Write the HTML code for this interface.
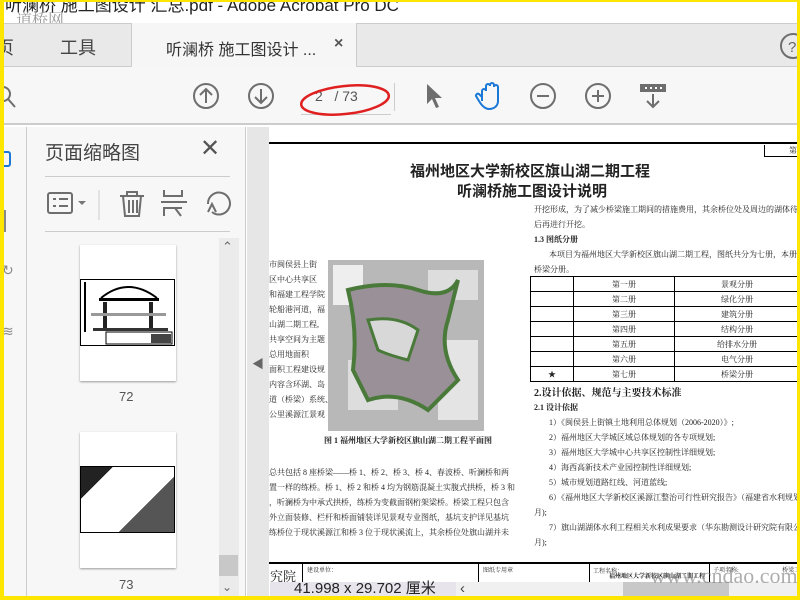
<!DOCTYPE html>
<html><head><meta charset="utf-8"><style>
*{margin:0;padding:0;box-sizing:border-box}
body{width:800px;height:600px;overflow:hidden;position:relative;background:#fff;font-family:"Liberation Sans","Noto Sans CJK SC",sans-serif}
.a{position:absolute}
.t{position:absolute;white-space:nowrap}
.doc{font-family:"Liberation Serif","Noto Serif CJK SC",serif;color:#222;font-size:8px}
.ic{stroke:#6e6e6e;fill:none;stroke-width:2}
td{border:1px solid #000;text-align:center;font-size:8px;height:15px;font-family:"Noto Serif CJK SC",serif}
</style></head><body>
<div class="a" style="left:0;top:0;width:800px;height:23px;background:#fff"></div>
<div class="t" style="left:5px;top:-9px;font-size:17px;color:#222">听澜桥 施工图设计 汇总.pdf - Adobe Acrobat Pro DC</div>
<div class="t" style="left:16px;top:7px;font-size:16px;color:#999;font-family:'Noto Serif CJK SC',serif">道桥网</div>
<div class="a" style="left:0;top:23px;width:800px;height:44px;background:#e9e9e9;border-top:1px solid #ccc;border-bottom:1px solid #ccc"></div>
<div class="a" style="left:131px;top:23px;width:226px;height:45px;background:#f6f6f6;border-left:1px solid #ccc;border-right:1px solid #ccc"></div>
<div class="t" style="left:-4px;top:34px;font-size:18px;color:#444">页</div>
<div class="t" style="left:60px;top:34px;font-size:18px;color:#444">工具</div>
<div class="t" style="left:166px;top:36px;font-size:16px;color:#333">听澜桥 施工图设计 ...</div>
<div class="t" style="left:334px;top:35px;font-size:16px;color:#555;font-weight:bold">×</div>
<svg class="a" style="left:778px;top:32px" width="22" height="28"><circle cx="15" cy="14" r="12" class="ic"/><text x="10" y="20" font-size="15" fill="#666" font-family="Liberation Sans">?</text></svg>
<div class="a" style="left:0;top:67px;width:800px;height:58px;background:#f7f7f7;border-bottom:2px solid #ccc"></div>
<svg class="a" style="left:0;top:84px" width="20" height="26"><circle cx="3" cy="10" r="7" class="ic" stroke-width="2.5"/><line x1="8" y1="15" x2="15" y2="23" class="ic" stroke-width="3"/></svg>
<svg class="a" style="left:192px;top:82px" width="28" height="28"><circle cx="14" cy="14" r="12" class="ic"/><path d="M14 21V7M8 13l6-6 6 6" class="ic"/></svg>
<svg class="a" style="left:247px;top:82px" width="28" height="28"><circle cx="14" cy="14" r="12" class="ic"/><path d="M14 7v14M8 15l6 6 6-6" class="ic"/></svg>
<div class="a" style="left:301px;top:114px;width:90px;height:1px;background:#ccc"></div>
<div class="t" style="left:315px;top:88px;font-size:14px;color:#555">2&nbsp;&nbsp;&nbsp;/ 73</div>
<svg class="a" style="left:298px;top:80px" width="96" height="40"><ellipse cx="47" cy="20" rx="44" ry="14" fill="none" stroke="#e02020" stroke-width="2.5" transform="rotate(-6 47 20)"/></svg>
<div class="a" style="left:394px;top:83px;width:1px;height:28px;background:#ccc"></div>
<svg class="a" style="left:424px;top:82px" width="20" height="28"><path d="M3 2v20l5-5 4 9 3-1-4-9h7z" fill="#6e6e6e"/></svg>
<svg class="a" style="left:474px;top:81px" width="30" height="30"><path d="M8 20V10a2 2 0 014 0V5a2 2 0 014 0v-1a2 2 0 014 0v2a2 2 0 014 0v14c0 5-4 8-9 8-4 0-7-3-10-8l-3-5a2 2 0 013-2l3 3" fill="none" stroke="#1a78d6" stroke-width="2"/></svg>
<svg class="a" style="left:529px;top:82px" width="28" height="28"><circle cx="14" cy="14" r="12" class="ic"/><path d="M8 14h12" class="ic"/></svg>
<svg class="a" style="left:584px;top:82px" width="28" height="28"><circle cx="14" cy="14" r="12" class="ic"/><path d="M8 14h12M14 8v12" class="ic"/></svg>
<svg class="a" style="left:639px;top:82px" width="28" height="30"><rect x="1" y="2" width="26" height="8" fill="#6e6e6e"/><path d="M6 6h2M11 6h2M16 6h2M21 6h2" stroke="#fff" stroke-width="2"/><path d="M14 12v13M8 19l6 6 6-6" class="ic"/></svg>
<div class="a" style="left:0;top:127px;width:27px;height:473px;background:#f7f7f7;border-right:1px solid #ccc"></div>
<div class="a" style="left:4px;top:151px;width:7px;height:16px;border:2px solid #1a78d6;border-left:none;border-radius:0 3px 3px 0"></div>
<div class="a" style="left:4px;top:210px;width:2px;height:22px;background:#888"></div>
<div class="t" style="left:2px;top:262px;font-size:14px;color:#888">↻</div>
<div class="t" style="left:2px;top:323px;font-size:14px;color:#888">≋</div>
<div class="a" style="left:27px;top:127px;width:219px;height:473px;background:#f7f7f7;border-right:1px solid #ccc"></div>
<div class="t" style="left:45px;top:138px;font-size:19px;color:#444">页面缩略图</div>
<div class="t" style="left:200px;top:134px;font-size:24px;color:#555">✕</div>
<div class="a" style="left:45px;top:176px;width:185px;height:1px;background:#ccc"></div>
<svg class="a" style="left:45px;top:188px" width="190" height="32"><rect x="3" y="5" width="24" height="20" rx="2" class="ic" stroke-width="2.5"/><path d="M8 11h3M14 11h9M8 18h3M14 18h9" class="ic" stroke-width="2.5"/><path d="M33 13h8l-4 4z" fill="#777"/><line x1="54" y1="2" x2="54" y2="32" stroke="#ccc"/><path d="M75 8h24M82 8V4h10v4M78 8l2 20h14l2-20M84 12v13M88 12v13M92 12v13" class="ic" stroke-width="2.2"/><path d="M119 2v6h18V2M119 28v-8h18M116 14h26M136 28l-6-8" class="ic" stroke-width="2.5"/><path d="M167 24a11 11 0 10-4-8M163 24l4-8 4 8" class="ic" stroke-width="2.5"/></svg>
<div class="a" style="left:45px;top:231px;width:185px;height:1px;background:#ccc"></div>
<div class="a" style="left:219px;top:238px;width:20px;height:358px;background:#ebebeb"></div>
<div class="t" style="left:222px;top:239px;font-size:13px;color:#666">⌃</div>
<div class="a" style="left:219px;top:555px;width:19px;height:21px;background:#c8c8c8"></div>
<div class="t" style="left:222px;top:580px;font-size:12px;color:#666">⌄</div>
<div class="a" style="left:80px;top:245px;width:96px;height:136px;background:#fff;box-shadow:0 1px 2px #999"></div>
<div class="a" style="left:80px;top:279px;width:95px;height:67px;border:1px solid #000;background:#fff"></div>
<svg class="a" style="left:81px;top:280px" width="93" height="65"><rect x="3" y="2" width="2" height="50" fill="#000"/><path d="M20 18Q47 -4 76 18" stroke="#000" fill="none" stroke-width="2"/><rect x="18" y="18" width="60" height="3" fill="#000"/><rect x="22" y="22" width="4" height="28" fill="#222"/><rect x="68" y="22" width="4" height="28" fill="#222"/><rect x="10" y="33" width="75" height="3" fill="#999"/><rect x="12" y="48" width="75" height="3" fill="#333"/><rect x="25" y="52" width="66" height="12" fill="none" stroke="#000"/><rect x="70" y="54" width="20" height="9" fill="#444"/></svg>
<div class="t" style="left:119px;top:389px;font-size:13px;color:#555">72</div>
<div class="a" style="left:80px;top:432px;width:96px;height:136px;background:#fff;box-shadow:0 1px 2px #999"></div>
<div class="a" style="left:80px;top:466px;width:95px;height:67px;border:1px solid #000;background:linear-gradient(135deg,#222 0 20%,#fff 20% 65%,#555 65%)"></div>
<div class="t" style="left:119px;top:577px;font-size:13px;color:#555">73</div>
<div class="a" style="left:247px;top:127px;width:22px;height:473px;background:#e6e6e6"></div>
<div class="t" style="left:252px;top:355px;font-size:12px;color:#666">◀</div>
<div class="a doc" style="left:269px;top:127px;width:528px;height:469px;background:#fff">
 <div class="a" style="left:0;top:15px;width:528px;height:2px;background:#000"></div>
 <div class="a" style="left:495px;top:18px;width:33px;height:12px;border-bottom:1px solid #000;border-left:1px solid #000;font-size:8px;text-align:right">第</div>
 <div class="t" style="left:141px;top:33px;font-size:15px;font-weight:bold;font-family:'Noto Sans CJK SC',sans-serif">福州地区大学新校区旗山湖二期工程</div>
 <div class="t" style="left:188px;top:53px;font-size:15px;font-weight:bold;font-family:'Noto Sans CJK SC',sans-serif">听澜桥施工图设计说明</div>
 <div class="t" style="left:265px;top:77px">开挖形成，为了减少桥梁施工期间的措施费用，其余桥位处及周边的湖体待桥梁</div>
 <div class="t" style="left:265px;top:92px">后再进行开挖。</div>
 <div class="t" style="left:265px;top:107px;font-weight:bold">1.3 图纸分册</div>
 <div class="t" style="left:280px;top:122px">本项目为福州地区大学新校区旗山湖二期工程，图纸共分为七册，本册为桥</div>
 <div class="t" style="left:265px;top:137px">桥梁分册。</div>
 <table class="a" style="left:261px;top:149px;width:270px;border-collapse:collapse">
  <tr><td style="width:43px"></td><td style="width:101px">第一册</td><td>景观分册</td></tr>
  <tr><td></td><td>第二册</td><td>绿化分册</td></tr>
  <tr><td></td><td>第三册</td><td>建筑分册</td></tr>
  <tr><td></td><td>第四册</td><td>结构分册</td></tr>
  <tr><td></td><td>第五册</td><td>给排水分册</td></tr>
  <tr><td></td><td>第六册</td><td>电气分册</td></tr>
  <tr><td>★</td><td>第七册</td><td>桥梁分册</td></tr>
 </table>
 <div class="t" style="left:265px;top:257px;font-size:10px;font-weight:bold">2.设计依据、规范与主要技术标准</div>
 <div class="t" style="left:265px;top:275px;font-weight:bold">2.1 设计依据</div>
 <div class="t" style="left:280px;top:290px">1）《闽侯县上街镇土地利用总体规划（2006-2020）》;</div>
 <div class="t" style="left:280px;top:305px">2）福州地区大学城区域总体规划的各专项规划;</div>
 <div class="t" style="left:280px;top:320px">3）福州地区大学城中心共享区控制性详细规划;</div>
 <div class="t" style="left:280px;top:335px">4）海西高新技术产业园控制性详细规划;</div>
 <div class="t" style="left:280px;top:350px">5）城市规划道路红线、河道蓝线;</div>
 <div class="t" style="left:280px;top:365px">6）《福州地区大学新校区溪源江整治可行性研究报告》（福建省水利规划院</div>
 <div class="t" style="left:265px;top:380px">月);</div>
 <div class="t" style="left:280px;top:395px">7）旗山湖湖体水利工程相关水利成果要求（华东勘测设计研究院有限公司</div>
 <div class="t" style="left:265px;top:410px">月);</div>
 <div class="a" style="left:0;top:130px;width:60px;line-height:15px;white-space:nowrap">市闽侯县上街<br>区中心共享区<br>和福建工程学院<br>轮船港河道，福<br>山湖二期工程,<br>共享空间为主题<br>总用地面积<br>面积工程建设规<br>内容含环湖、岛<br>道（桥梁）系统、<br>公里溪源江景观</div>
 <svg class="a" style="left:59px;top:133px" width="156" height="171"><rect width="156" height="171" fill="#b8b8b8"/><rect x="5" y="5" width="30" height="40" fill="#eee"/><rect x="100" y="10" width="50" height="30" fill="#ddd"/><rect x="110" y="80" width="40" height="80" fill="#e4e4e4"/><rect x="20" y="100" width="50" height="50" fill="#ddd"/><path d="M20 30Q60 20 90 30T130 20L120 60Q110 90 130 120L100 150Q70 130 40 140L25 110Q30 70 20 30z" fill="#9a9098" stroke="#4a7a3a" stroke-width="4"/><path d="M40 60Q70 55 90 70L80 100Q60 95 50 90z" fill="#d8d8d8" stroke="#4a7a3a" stroke-width="3"/></svg>
 <div class="t" style="left:55px;top:308px;font-weight:bold">图 1 福州地区大学新校区旗山湖二期工程平面图</div>
 <div class="a" style="left:0;top:338px;line-height:15px;white-space:nowrap">总共包括 8 座桥梁——桥 1、桥 2、桥 3、桥 4、春波桥、听澜桥和两<br>置一样的练桥。桥 1、桥 2 和桥 4 均为钢筋混凝土实腹式拱桥，桥 3 和<br>，听澜桥为中承式拱桥，练桥为变截面钢桁架梁桥。桥梁工程只包含<br>外立面装修、栏杆和桥面铺装详见景观专业图纸，基坑支护详见基坑<br>练桥位于现状溪源江和桥 3 位于现状溪流上，其余桥位处旗山湖并未</div>
 <div class="a" style="left:0;top:435px;width:528px;height:2px;background:#000"></div>
 <div class="a" style="left:33px;top:436px;width:1px;height:20px;background:#000"></div>
 <div class="a" style="left:209px;top:436px;width:1px;height:20px;background:#000"></div>
 <div class="a" style="left:320px;top:436px;width:1px;height:20px;background:#000"></div>
 <div class="a" style="left:440px;top:436px;width:1px;height:20px;background:#000"></div>
 <div class="t" style="left:1px;top:439px;font-size:13px">究院</div>
 <div class="t" style="left:38px;top:438px;font-size:6px">建设单位：</div>
 <div class="t" style="left:214px;top:438px;font-size:6px">图纸专用章</div>
 <div class="t" style="left:324px;top:439px;font-size:6px">工程名称：</div>
 <div class="t" style="left:310px;top:444px;font-size:6px;font-weight:bold">　　　　　福州地区大学新校区旗山湖二期工程</div>
 <div class="t" style="left:444px;top:438px;font-size:6px">子项名称:　　　　　　　 桥梁工程</div>
</div>
<div class="a" style="left:270px;top:582px;width:527px;height:14px;background:#f0f0f0"></div>
<div class="a" style="left:270px;top:582px;width:186px;height:14px;background:#e8e4ec"></div>
<div class="t" style="left:294px;top:580px;font-size:15px;color:#222;line-height:18px">41.998 x 29.702 厘米</div>
<div class="t" style="left:460px;top:580px;font-size:15px;color:#444;line-height:18px">‹</div>
<div class="a" style="left:623px;top:582px;width:106px;height:14px;background:#c8c8c8"></div>
<div class="t" style="left:650px;top:563px;font-size:22px;color:rgba(120,120,120,.6);font-family:'Liberation Serif',serif">www.cndao.com</div>
<div class="a" style="left:0;top:0;width:800px;height:2px;background:#ffe600"></div>
<div class="a" style="left:0;top:0;width:4px;height:600px;background:#ffe600"></div>
<div class="a" style="left:797px;top:0;width:3px;height:600px;background:#ffe600"></div>
<div class="a" style="left:0;top:596px;width:800px;height:4px;background:#ffe600"></div>
</body></html>
